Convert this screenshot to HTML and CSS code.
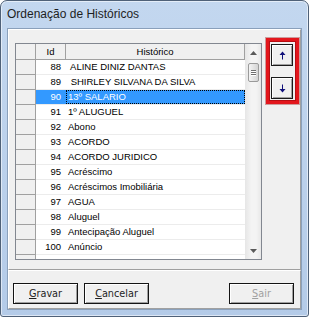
FILE: index.html
```html
<!DOCTYPE html>
<html lang="pt">
<head>
    <meta charset="UTF-8">
    <title>Ordenação de Históricos</title>
    <link rel="stylesheet" href="styles.css">
</head>
<body>

<div class="window">
    <div class="titlebar">Ordenação de Históricos</div>

    <div class="client">
        <!-- painel superior: grade + botões de ordem -->
        <div class="panel panel-top">
            <div class="grid">
                <div class="grid-body">
                    <div class="row header">
                        <div class="cell ind"></div>
                        <div class="cell id">Id</div>
                        <div class="cell hist">Histórico</div>
                    </div>
                    <div class="row"><div class="cell ind"></div><div class="cell id">88</div><div class="cell hist"> ALINE DINIZ DANTAS</div></div>
                    <div class="row"><div class="cell ind"></div><div class="cell id">89</div><div class="cell hist"> SHIRLEY SILVANA DA SILVA</div></div>
                    <div class="row selected"><div class="cell ind"></div><div class="cell id">90</div><div class="cell hist"><span class="focus">13º SALARIO</span></div></div>
                    <div class="row"><div class="cell ind"></div><div class="cell id">91</div><div class="cell hist">1º ALUGUEL</div></div>
                    <div class="row"><div class="cell ind"></div><div class="cell id">92</div><div class="cell hist">Abono</div></div>
                    <div class="row"><div class="cell ind"></div><div class="cell id">93</div><div class="cell hist">ACORDO</div></div>
                    <div class="row"><div class="cell ind"></div><div class="cell id">94</div><div class="cell hist">ACORDO JURIDICO</div></div>
                    <div class="row"><div class="cell ind"></div><div class="cell id">95</div><div class="cell hist">Acréscimo</div></div>
                    <div class="row"><div class="cell ind"></div><div class="cell id">96</div><div class="cell hist">Acréscimos Imobiliária</div></div>
                    <div class="row"><div class="cell ind"></div><div class="cell id">97</div><div class="cell hist">AGUA</div></div>
                    <div class="row"><div class="cell ind"></div><div class="cell id">98</div><div class="cell hist">Aluguel</div></div>
                    <div class="row"><div class="cell ind"></div><div class="cell id">99</div><div class="cell hist">Antecipação Aluguel</div></div>
                    <div class="row"><div class="cell ind"></div><div class="cell id">100</div><div class="cell hist">Anúncio</div></div>
                    <div class="row"><div class="cell ind"></div><div class="cell id"></div><div class="cell hist"></div></div>
                </div>
                <div class="scrollbar">
                    <div class="sb-btn"><svg width="7" height="4" viewBox="0 0 7 4"><path d="M3.5 0 L7 4 L0 4 Z" fill="#5a5a5a"/></svg></div>
                    <div class="sb-thumb"><span></span><span></span><span></span></div>
                    <div class="sb-track"></div>
                    <div class="sb-btn"><svg width="7" height="4" viewBox="0 0 7 4"><path d="M0 0 L7 0 L3.5 4 Z" fill="#5a5a5a"/></svg></div>
                </div>
            </div>

            <div class="order-box">
                <button class="order-btn" title="Subir">
                    <svg width="7" height="9" viewBox="0 0 7 9"><path d="M3.5 0.5 L6.5 4 L4 4 L4 8.5 L3 8.5 L3 4 L0.5 4 Z" fill="#10107a"/></svg>
                </button>
                <button class="order-btn" title="Descer">
                    <svg width="7" height="9" viewBox="0 0 7 9"><path d="M3 0.5 L4 0.5 L4 5 L6.5 5 L3.5 8.5 L0.5 5 L3 5 Z" fill="#10107a"/></svg>
                </button>
            </div>
        </div>

        <!-- painel inferior: ações -->
        <div class="panel panel-bottom">
            <button class="btn"><u>G</u>ravar</button>
            <button class="btn"><u>C</u>ancelar</button>
            <button class="btn btn-right" disabled><u>S</u>air</button>
        </div>
    </div>
</div>

</body>
</html>
```

FILE: styles.css
```css
body {
    margin: 0;
    background: #fff;
}

.window {
    width: 309px;
    height: 317px;
    box-sizing: border-box;
    display: flex;
    flex-direction: column;
    background: linear-gradient(to bottom, #c3d7ef 0%, #bad0eb 60%, #b4cbe8 100%);
    border: 1px solid #4f6178;
    border-top-right-radius: 7px;
    border-top-left-radius: 7px;
    border-bottom-right-radius: 3px;
    border-bottom-left-radius: 3px;
    box-shadow: inset 0 0 0 1px rgba(255, 255, 255, 0.55);
}

.titlebar {
    height: 27px;
    flex: none;
    padding-left: 6px;
    font-family: "Liberation Sans", Arial, sans-serif;
    font-size: 12px;
    line-height: 17px;
    padding-top: 5px;
    box-sizing: border-box;
    color: #1e1e1e;
}

.client {
    margin: 0 6px;
    height: 282px;
    flex: none;
    box-sizing: border-box;
    border: 1px solid #8aa0bb;
    background: #f0f0f0;
    display: flex;
    flex-direction: column;
}

.panel {
    box-sizing: border-box;
    border-top: 1px solid #fff;
    border-left: 1px solid #fff;
    border-right: 1px solid #a0a0a0;
    border-bottom: 1px solid #a0a0a0;
}

.panel-top {
    height: 241px;
    display: flex;
    align-items: flex-start;
    padding: 13px 0 0 6px;
}

.panel-bottom {
    flex: 1;
    display: flex;
    align-items: flex-start;
    gap: 6px;
    padding: 12px 0 0 4px;
}

/* grade */
.grid {
    width: 247px;
    height: 217px;
    box-sizing: border-box;
    border: 1px solid #828790;
    background: #fff;
    display: flex;
    overflow: hidden;
}

.grid-body {
    width: 229px;
    overflow: hidden;
    font-family: "Liberation Sans", Arial, sans-serif;
    font-size: 9.5px;
    color: #000;
}

.row {
    display: flex;
    height: 15px;
    box-sizing: border-box;
    border-bottom: 1px solid #ececec;
}

.cell {
    box-sizing: border-box;
    line-height: 14px;
    white-space: pre;
    overflow: hidden;
}

.cell.ind {
    width: 20px;
    background: #f0f0f0;
    border-right: 1px solid #a0a0a0;
    border-bottom: 1px solid #a0a0a0;
    margin-bottom: -1px;
}

.cell.id {
    width: 30px;
    text-align: right;
    padding-right: 5px;
}

.cell.hist {
    width: 179px;
    padding-left: 2px;
}

.row.header {
    height: 16px;
    background: #f0f0f0;
    border-bottom: 1px solid #a0a0a0;
}

.row.header .cell {
    line-height: 15px;
    text-align: center;
    border-right: 1px solid #a0a0a0;
    padding: 0;
}

.row.header .cell.ind {
    border-bottom: none;
    margin-bottom: 0;
}

.row.selected .cell.id,
.row.selected .cell.hist {
    background: #3399ff;
    color: #fff;
}

.row.selected .cell.hist {
    padding: 0;
}

.focus {
    display: block;
    height: 14px;
    box-sizing: border-box;
    padding-left: 1px;
    line-height: 12px;
    outline: 1px dotted #000;
    outline-offset: -1px;
    border: 1px solid transparent;
}

/* barra de rolagem */
.scrollbar {
    width: 16px;
    display: flex;
    flex-direction: column;
    align-items: center;
    background: linear-gradient(to right, #e6e6e6, #f4f4f4 40%, #f4f4f4 70%, #e8e8e8);
}

.sb-btn {
    height: 17px;
    width: 100%;
    display: flex;
    align-items: center;
    justify-content: center;
}

.sb-thumb {
    width: 11px;
    height: 19px;
    margin-top: 2px;
    box-sizing: border-box;
    border: 1px solid #9a9a9a;
    border-radius: 2px;
    background: linear-gradient(to right, #f4f4f4, #e4e4e4 50%, #d4d4d4);
    display: flex;
    flex-direction: column;
    align-items: center;
    justify-content: center;
    gap: 1px;
}

.sb-thumb span {
    width: 5px;
    height: 1px;
    background: #6e6e6e;
    box-shadow: 0 1px 0 #fff;
}

.sb-track {
    flex: 1;
}

/* botões de ordem */
.order-box {
    width: 33px;
    height: 66px;
    margin: -5px 0 0 4px;
    box-sizing: border-box;
    border: 3px solid #e3161c;
    box-shadow: 0 0 0 1px #b80d12 inset, 0 0 0 1px rgba(140, 0, 0, 0.35);
    display: flex;
    flex-direction: column;
    gap: 11px;
    padding: 3px 0 0 2px;
}

.order-btn {
    width: 22px;
    height: 22px;
    padding: 0;
    margin: 0;
    box-sizing: border-box;
    border: 1px solid #1a1a1a;
    background: #f0f0f0;
    box-shadow: inset 1px 1px 0 #fff, inset -1px -1px 0 #a0a0a0;
    display: flex;
    align-items: center;
    justify-content: center;
}

/* botões inferiores */
.btn {
    width: 65px;
    height: 21px;
    padding: 0;
    margin: 0;
    box-sizing: border-box;
    border: 1px solid #141414;
    background: #f0f0f0;
    box-shadow: inset 1px 1px 0 #fff, inset -1px -1px 0 #a0a0a0;
    font-family: "DejaVu Sans", Tahoma, sans-serif;
    font-size: 9.7px;
    color: #1e1e1e;
}

.btn:disabled {
    color: #a0a0a0;
}

.btn-right {
    margin-left: 74px;
}
```
